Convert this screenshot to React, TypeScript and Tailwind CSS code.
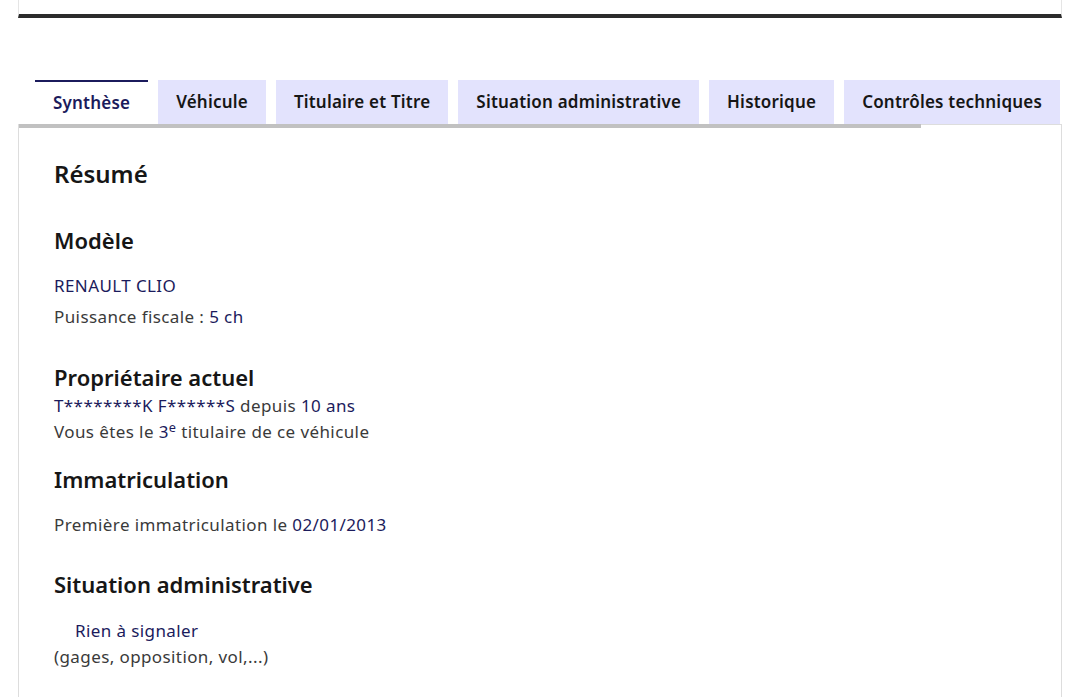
const tabs = ['Synthèse', 'Véhicule', 'Titulaire et Titre', 'Situation administrative', 'Historique', 'Contrôles techniques']

const navy = 'text-[#1b1b5c]'

export default function App() {
  return (
    <div className="min-h-screen bg-white text-[#3a3a3a] font-['Noto_Sans',sans-serif]">
      <div className="mx-[18px] h-[18px] border-x border-[#e5e5e5] border-b-4 border-b-[#2b2b2b]" />

      <div className="mx-[18px] mt-[62px]">
        <div className="flex gap-[10px] pl-[17px]">
          {tabs.map((t, i) => (
            <div
              key={t}
              className={
                i === 0
                  ? 'relative z-10 h-[44px] px-[18px] flex items-center bg-white border-t-2 border-[#1b1b5c] text-[17px] tracking-[0.2px] font-semibold text-[#1b1b5c]'
                  : 'h-[44px] px-[18px] flex items-center bg-[#e3e3fd] text-[17px] tracking-[0.2px] font-semibold text-[#161616]'
              }
            >
              {t}
            </div>
          ))}
        </div>

        <div className="relative border border-[#dddddd] pl-[35px] pt-[33px] pb-10 text-[17px] tracking-[0.4px]">
          <div className="absolute left-0 top-[-1px] h-[4px] w-[902px] bg-[#c1c1c1]" />
          <h2 className="text-[24px] leading-[32px] font-semibold tracking-normal text-[#161616]">Résumé</h2>

          <h3 className="mt-[36px] text-[22px] leading-[28px] font-semibold tracking-normal text-[#161616]">Modèle</h3>
          <p className={`mt-[20px] leading-[24px] ${navy}`}>RENAULT CLIO</p>
          <p className="mt-[7px] leading-[24px]">
            Puissance fiscale : <span className={navy}>5 ch</span>
          </p>

          <h3 className="mt-[34px] text-[22px] leading-[28px] font-semibold tracking-normal text-[#161616]">Propriétaire actuel</h3>
          <p className="mt-[2px] leading-[26px]">
            <span className={navy}>T********K F******S</span> depuis <span className={navy}>10 ans</span>
          </p>
          <p className="leading-[26px]">
            Vous êtes le <span className={navy}>3<sup>e</sup></span> titulaire de ce véhicule
          </p>

          <h3 className="mt-[20px] text-[22px] leading-[28px] font-semibold tracking-normal text-[#161616]">Immatriculation</h3>
          <p className="mt-[20px] leading-[24px]">
            Première immatriculation le <span className={navy}>02/01/2013</span>
          </p>

          <h3 className="mt-[33px] text-[22px] leading-[28px] font-semibold tracking-normal text-[#161616]">Situation administrative</h3>
          <p className={`mt-[21px] pl-[21px] leading-[24px] ${navy}`}>Rien à signaler</p>
          <p className="leading-[28px]">(gages, opposition, vol,...)</p>
        </div>
      </div>
    </div>
  )
}
